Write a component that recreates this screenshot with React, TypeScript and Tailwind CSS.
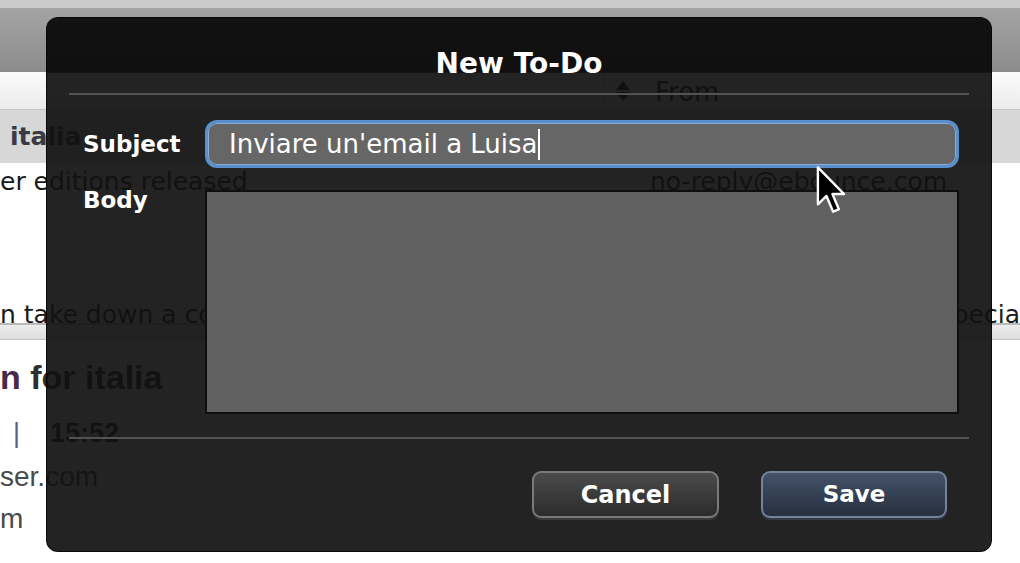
import React from 'react';

const lucida = "font-['DejaVu_Sans',sans-serif]";
const helv = "font-['Liberation_Sans',Arial,sans-serif]";

const SortArrows: React.FC = () => (
  <svg width="16" height="22" viewBox="0 0 16 22">
    <path d="M8 1 L15 10 L1 10 Z" fill="#111" />
    <path d="M8 21 L15 12 L1 12 Z" fill="#111" />
  </svg>
);

const MouseCursor: React.FC = () => (
  <svg width="32" height="50" viewBox="0 0 13 21" className="absolute left-[815px] top-[165px]">
    <path
      d="M1 1 L1 16.5 L4.6 13 L7.4 19.6 L9.8 18.6 L7.1 12.2 L12 12.2 Z"
      fill="#000"
      stroke="#fff"
      strokeWidth="1"
      strokeLinejoin="round"
    />
  </svg>
);

const MailBackground: React.FC = () => (
  <div className="flex flex-col h-full">
    <div className="h-[8px] bg-[#cbcbcb]" />
    <div className="h-[64px] bg-gradient-to-b from-[#a4a4a4] to-[#8c8c8c]" />

    {/* column header */}
    <div className="h-[38px] flex bg-gradient-to-b from-[#fbfbfb] to-[#ececec] border-b border-[#c4c4c4]">
      <div className="w-[603px]" />
      <div className="w-[40px] flex items-center justify-center border-l border-r border-[#c6c6c6]">
        <SortArrows />
      </div>
      <div className={`pl-[12px] pt-[4px] flex items-center text-[26px] text-[#222] ${lucida}`}>From</div>
    </div>

    {/* list rows */}
    <div className={`h-[53px] flex items-center pl-[10px] bg-[#d7d7d7] text-[25px] font-bold text-[#3a3a44] ${lucida}`}>
      italia
    </div>
    <div className={`h-[38px] flex items-center text-[25px] text-[#1a1a1a] ${lucida}`}>
      <span className="w-[650px]">er editions released</span>
      <span>no-reply@ebounce.com</span>
    </div>
    <div className="h-[96px]" />
    <div className={`h-[26px] overflow-hidden flex pt-[3px] leading-[30px] text-[25px] text-[#1a1a1a] ${lucida}`}>
      <span className="w-[965px] whitespace-nowrap">n take down a copy</span>
      <span className="whitespace-nowrap">pecia</span>
    </div>
    <div className="h-[2px] bg-[#b9b9b9]" />
    <div className="h-[15px] bg-gradient-to-b from-[#ececec] to-[#dedede] border-b border-[#c2c2c2]" />

    {/* preview */}
    <div className={`flex flex-col pt-[17px] ${helv}`}>
      <div className="h-[40px] leading-[40px] text-[34px] font-bold text-[#2e2e2e]">
        <span className="text-[#4a2848]">n</span> for italia
      </div>
      <div className="mt-[19px] h-[34px] leading-[34px] flex items-center text-[27px] font-bold text-[#2e2e2e]">
        <span className="w-[50px] pl-[13px] font-normal text-[#556080]">|</span>
        <span>15:52</span>
      </div>
      <div className="mt-[10px] h-[34px] leading-[34px] text-[28px] text-[#4a4a4a]">ser.com</div>
      <div className="mt-[8px] h-[34px] leading-[34px] text-[28px] text-[#4a4a4a]">m</div>
    </div>
  </div>
);

const NewTodoSheet: React.FC = () => (
  <div
    className={`absolute left-[46px] top-[17px] w-[946px] h-[535px] rounded-[12px] bg-[rgba(16,16,16,0.92)] border border-black/70 flex flex-col ${lucida}`}
  >
    <div className="h-[55px] rounded-t-[12px] bg-black/35 flex justify-center">
      <h1 className="pt-[29px] leading-[34px] text-[28px] font-bold text-white">New To-Do</h1>
    </div>

    <div className="mt-[20px] mx-[22px] h-[2px] bg-[#535353]" />

    <div className="mt-[25px] flex items-center pl-[36px]">
      <label className="w-[122px] text-[23px] font-bold text-white">Subject</label>
      <div className="w-[754px] h-[48px] rounded-[12px] border-[3px] border-[#5b8fcb] bg-[#666666] flex items-center pl-[21px] shadow-[inset_0_0_0_1px_#86ade0]">
        <span className="text-[26px] text-white leading-[32px]">Inviare un'email a Luisa</span>
        <span className="w-[2px] h-[31px] bg-white" />
      </div>
    </div>

    <div className="mt-[22px] flex pl-[36px]">
      <label className="w-[122px] -mt-[5px] leading-[30px] text-[23px] font-bold text-white">Body</label>
      <div className="w-[754px] h-[224px] border-2 border-[#0e0e0e] bg-[#606060]" />
    </div>

    <div className="mt-[23px] mx-[22px] h-[2px] bg-[#535353]" />

    <div className="mt-[32px] flex justify-end gap-[42px] pr-[44px]">
      <button className="w-[187px] h-[47px] rounded-[9px] border-2 border-[#7a7a7a] bg-gradient-to-b from-[#4b4b4b] to-[#2c2c2c] text-[24px] font-bold text-white shadow-[0_2px_0_#3a3a3a]">
        Cancel
      </button>
      <button className="w-[186px] h-[47px] rounded-[9px] border-2 border-[#74829a] bg-gradient-to-b from-[#445269] to-[#26303f] text-[23px] font-bold text-white shadow-[0_2px_0_#333a46]">
        Save
      </button>
    </div>
  </div>
);

export default function App() {
  return (
    <div className="relative w-[1020px] h-[563px] overflow-hidden bg-white">
      <MailBackground />
      <NewTodoSheet />
      <MouseCursor />
    </div>
  );
}
